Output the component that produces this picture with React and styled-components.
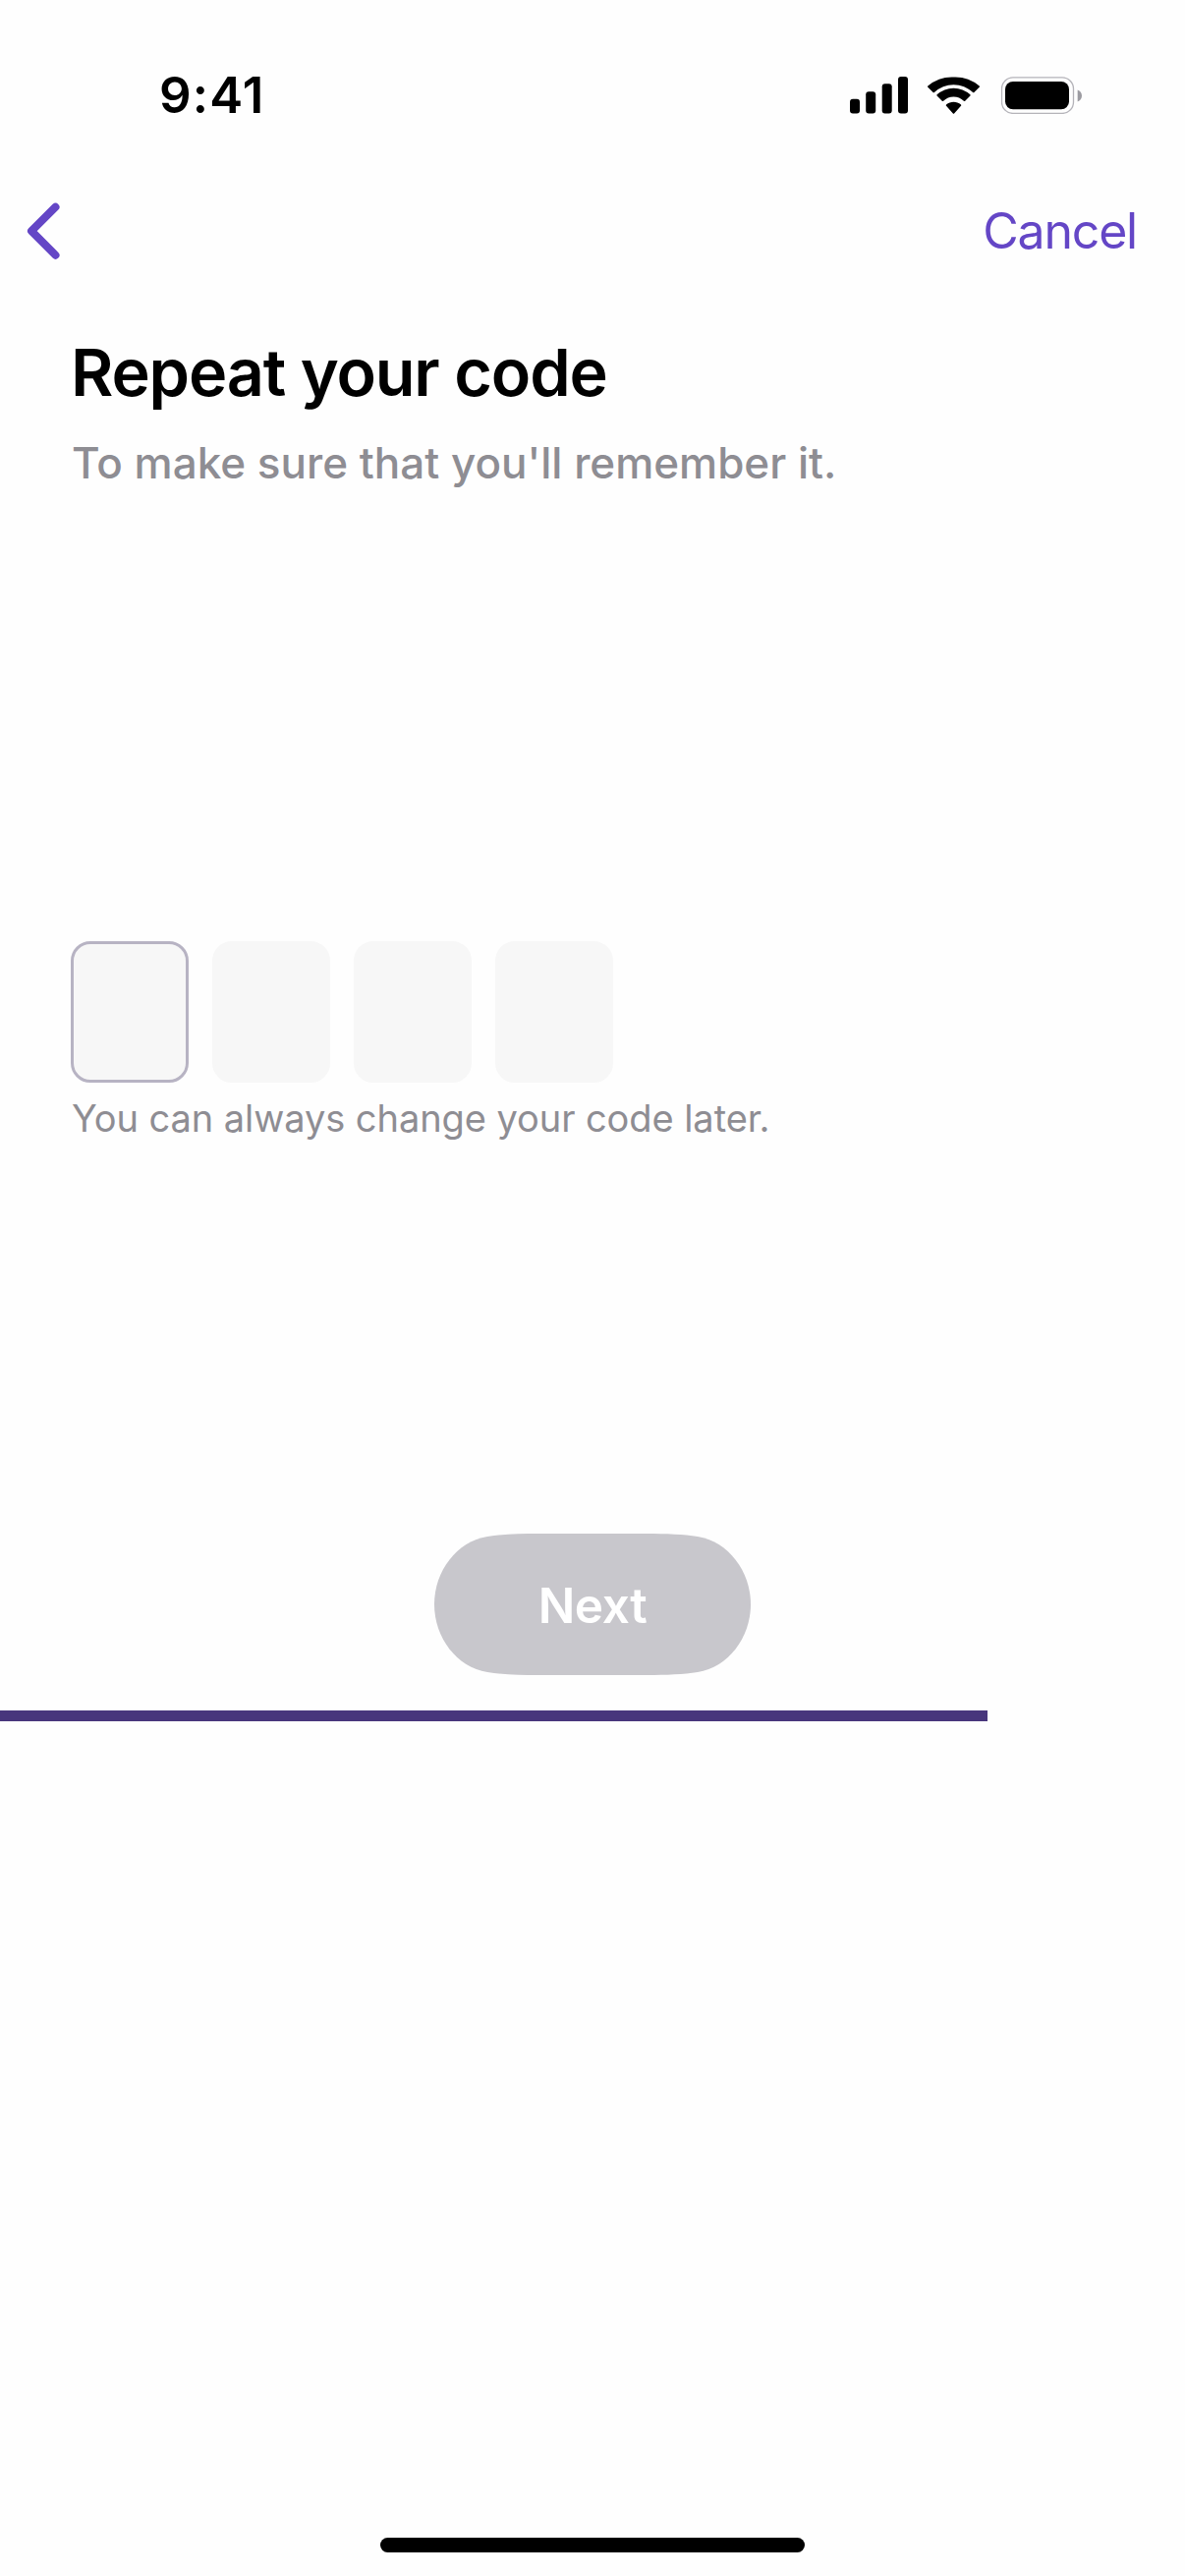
import styled, { createGlobalStyle } from 'styled-components';

const GlobalStyle = createGlobalStyle`
  * {
    box-sizing: border-box;
    margin: 0;
    padding: 0;
  }

  body {
    background-color: #fefefe;
    font-family: Inter, 'Liberation Sans', sans-serif;
  }
`;

const Screen = styled.div`
  width: 1206px;
  height: 2622px;
  display: flex;
  flex-direction: column;
  background-color: #fefefe;
  color: #000;
`;

const StatusBar = styled.header`
  height: 144px;
  padding: 50px 104px 0 162px;
  display: flex;
  justify-content: space-between;
  align-items: center;
`;

const Time = styled.time`
  font-size: 51px;
  font-weight: 600;
  line-height: 94px;
  letter-spacing: 1.2px;
`;

const StatusIcons = styled.div`
  display: flex;
  align-items: center;
  gap: 20px;

  svg {
    display: block;
  }
`;

const NavBar = styled.nav`
  height: 181px;
  padding: 0 49px 0 23px;
  display: flex;
  justify-content: space-between;
  align-items: center;
`;

const NavButton = styled.button`
  border: none;
  background: none;
  color: #6446c6;
  font-family: inherit;
  font-size: 50px;
  line-height: 60px;
  letter-spacing: -1.2px;
  cursor: pointer;

  svg {
    display: block;
  }
`;

const Content = styled.main`
  padding: 14px 72px 0;
  display: flex;
  flex-direction: column;
`;

const Title = styled.h1`
  padding-top: 1px;
  font-size: 66.5px;
  font-weight: 600;
  line-height: 78px;
  letter-spacing: -1.15px;
`;

const Subtitle = styled.p`
  margin-top: 25px;
  padding-left: 1px;
  color: #8e8d93;
  font-size: 44px;
  font-weight: 500;
  line-height: 56px;
`;

const CodeInput = styled.div`
  margin-top: 459px;
  display: flex;
  gap: 24px;
`;

const Cell = styled.div`
  width: 120px;
  height: 144px;
  border: 3px solid ${({ $active }) => ($active ? '#b7b3c3' : '#f7f7f7')};
  border-radius: 20px;
  background-color: #f7f7f7;
`;

const Hint = styled.p`
  margin-top: 12px;
  padding-left: 1px;
  color: #8e8d93;
  font-size: 38px;
  line-height: 48px;
  letter-spacing: -0.07px;
`;

const NextButton = styled.button`
  align-self: center;
  width: 322px;
  height: 144px;
  margin-top: 399px;
  padding-top: 2px;
  border: none;
  background-color: #c8c7cc;
  color: #fff;
  font-family: inherit;
  font-size: 49.5px;
  font-weight: 600;
  letter-spacing: -0.4px;
  /* continuous corners, flatter than a plain pill */
  clip-path: path(
    'M0 72C0 38 23 8 54 3C68 .8 86 0 106 0H216C236 0 254 .8 268 3C299 8 322 38 322 72C322 106 299 136 268 141C254 143.2 236 144 216 144H106C86 144 68 143.2 54 141C23 136 0 106 0 72Z'
  );
`;

const Progress = styled.div`
  height: 11px;
  margin-top: 36px;

  &::before {
    content: '';
    display: block;
    width: ${({ $value }) => $value}%;
    height: 100%;
    background-color: #48367c;
  }
`;

const HomeIndicator = styled.div`
  align-self: center;
  width: 432px;
  height: 15px;
  margin-top: auto;
  margin-bottom: 24px;
  border-radius: 8px;
  background-color: #000;
`;

const SignalIcon = () => (
  <svg width='59' height='38' viewBox='0 0 59 38'>
    <rect x='0' y='22.7' width='10' height='14.8' rx='3' />
    <rect x='16.2' y='15.2' width='10' height='22.3' rx='3' />
    <rect x='32.7' y='7.3' width='10' height='30.2' rx='3' />
    <rect x='49' y='0' width='10' height='37.5' rx='3' />
  </svg>
);

const WifiIcon = () => (
  <svg width='55' height='38' viewBox='0 0 55 38'>
    <path d='M26.500 8.200c7.500 0 14.300 2.900 19.600 7.800.4.4.9.4 1.300 0l5.300-5.200c.4-.4.4-.9 0-1.300A38 38 0 0 0 26.500.5 38 38 0 0 0 .3 9.500c-.4.4-.4.9 0 1.300L5.600 16c.4.4.9.4 1.300 0a28.800 28.800 0 0 1 19.600-7.800Z' />
    <path d='M26.500 20.600c3.900 0 7.500 1.500 10.400 4.200.4.4.9.4 1.300 0l5.200-5.200c.4-.4.4-.9 0-1.300a25 25 0 0 0-33.800 0c-.4.4-.4.9 0 1.300l5.200 5.200c.4.4.9.4 1.300 0 2.900-2.700 6.500-4.200 10.400-4.200Z' />
    <path d='M34 28.500c.4.4.4.9 0 1.300l-6.900 7.600c-.3.4-.9.4-1.200 0L19 29.800c-.4-.4-.4-.9 0-1.300 4.300-3.700 10.700-3.700 15 0Z' />
  </svg>
);

const BatteryIcon = () => (
  <svg width='83' height='38' viewBox='0 0 83 38'>
    <rect
      x='.5'
      y='.8'
      width='73'
      height='36.6'
      rx='11.5'
      fill='none'
      stroke='#b4b3b9'
      strokeWidth='1.3'
    />
    <rect x='4' y='5' width='65' height='28.3' rx='8' />
    <path d='M77.700 13.500v12c2.500-1 4.300-3.300 4.300-6s-1.800-5-4.300-6Z' fill='#9c9ba1' />
  </svg>
);

const BackIcon = () => (
  <svg width='40' height='60' viewBox='0 0 40 60' fill='none'>
    <path
      d='M33.500 5.700 9 30.100 33.500 54.700'
      stroke='currentColor'
      strokeWidth='8'
      strokeLinecap='round'
      strokeLinejoin='round'
    />
  </svg>
);

const cells = [0, 1, 2, 3];

const App = () => {
  return (
    <>
      <GlobalStyle />
      <Screen>
        <StatusBar>
          <Time>9:41</Time>
          <StatusIcons>
            <SignalIcon />
            <WifiIcon />
            <BatteryIcon />
          </StatusIcons>
        </StatusBar>
        <NavBar>
          <NavButton aria-label='Back'>
            <BackIcon />
          </NavButton>
          <NavButton>Cancel</NavButton>
        </NavBar>
        <Content>
          <Title>Repeat your code</Title>
          <Subtitle>To make sure that you'll remember it.</Subtitle>
          <CodeInput>
            {cells.map((cell) => (
              <Cell key={cell} $active={cell === 0} />
            ))}
          </CodeInput>
          <Hint>You can always change your code later.</Hint>
        </Content>
        <NextButton>Next</NextButton>
        <Progress $value={83.3} />
        <HomeIndicator />
      </Screen>
    </>
  );
};

export default App;
